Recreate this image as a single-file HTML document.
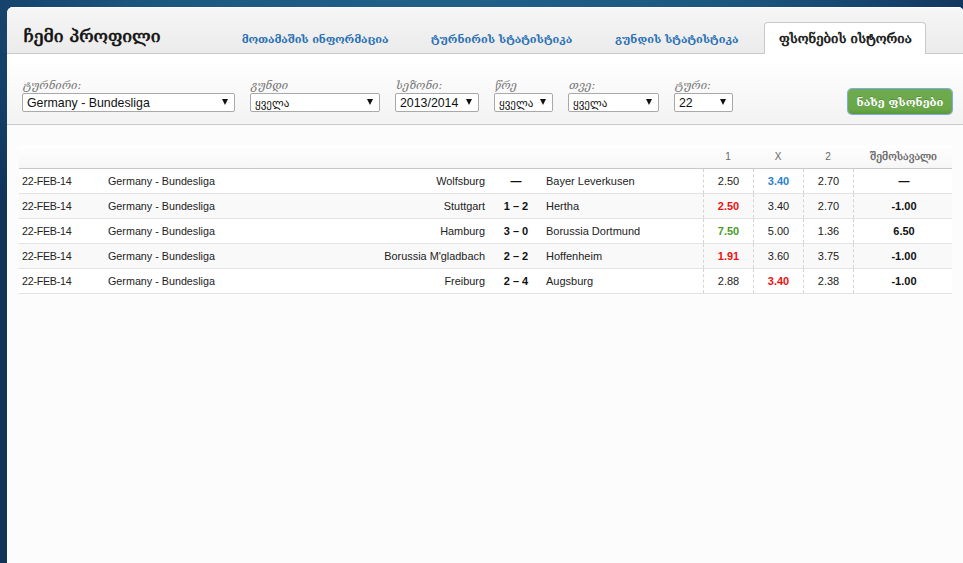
<!DOCTYPE html>
<html lang="ka">
<head>
<meta charset="utf-8">
<title>ჩემი პროფილი</title>
<style>
*{box-sizing:border-box;margin:0;padding:0}
html,body{width:963px;height:563px;overflow:hidden}
body{background:#10335a;background-image:radial-gradient(ellipse 545px 330px at 440px 0,#1f6089 0%,#1d5a84 38%,#1c567e 55%,#15426b 82%,#10335a 100%);font-family:"Liberation Sans","DejaVu Sans",sans-serif;font-size:11px;color:#222;position:relative}
.ka{font-family:"DejaVu Serif","DejaVu Sans",serif}
#panel{position:absolute;left:7px;top:7px;width:957px;height:600px;background:#fcfcfc;border-radius:6px 6px 0 0;overflow:hidden}
#head{position:absolute;left:0;top:0;width:100%;height:47px;background:linear-gradient(#f6f6f6,#ebebeb);border-bottom:1px solid #c9c9c9;box-shadow:inset 0 1px 0 #fff}
#title{position:absolute;left:16.5px;top:18px;font-size:17.5px;font-weight:normal;-webkit-text-stroke:0.6px #111;color:#111;line-height:22px;white-space:nowrap}
.tab{position:absolute;top:25px;font-size:11px;font-weight:bold;color:#2a70b3;white-space:nowrap;line-height:16px}
#tabA{position:absolute;left:757px;top:15px;width:162px;height:32px;background:#fff;border:1px solid #c9c9c9;border-bottom:none;border-radius:4px 4px 0 0}
#tabA span{position:absolute;left:14px;top:7px;font-size:13px;font-weight:normal;-webkit-text-stroke:0.55px #111;letter-spacing:0.08px;color:#111;white-space:nowrap;line-height:18px}
#filter{position:absolute;left:0;top:47px;width:100%;height:71px;background:linear-gradient(#fff 8%,#f3f3f3);border-bottom:1px solid #c9c9c9}
.lbl{position:absolute;top:25px;font-size:11.2px;font-style:italic;color:#777;margin-left:1px;white-space:nowrap;line-height:14px}
.sel{position:absolute;top:39px;height:19px;background:#fff;border:1px solid #a9a9a9;border-radius:2px;font-size:12.35px;line-height:19px;padding-left:4px;white-space:nowrap;color:#111}
.sel.k{font-family:'DejaVu Sans',sans-serif;font-size:11px;line-height:20px}
.sel i{position:absolute;right:6px;top:5px;width:0;height:0;border-left:3.5px solid transparent;border-right:3.5px solid transparent;border-top:6px solid #111}
#btn{position:absolute;left:841px;top:35px;width:104px;height:25px;border-radius:4px;background:linear-gradient(#6dab4d 0%,#69a749 80%,#5a983c 100%);color:#fff;font-weight:bold;font-size:11.2px;text-align:center;line-height:27px;box-shadow:0 0 0 1px #7fa9ec;text-shadow:0 -1px 0 rgba(0,0,0,.18)}
#tbl{position:absolute;left:12px;top:138px;width:933px}
#th{position:relative;height:24px;background:linear-gradient(#fff,#f6f6f6);border-bottom:1px solid #c9c9c9;color:#666;font-size:10px}
.r{position:relative;height:25px;border-bottom:1px solid #e3e3e3;background:#fff;font-size:11px;line-height:25px;color:#222}
.r.alt{background:#f9f9f9}
.c{position:absolute;top:0;white-space:nowrap}
.d{left:3px;font-size:10.7px;letter-spacing:-0.25px}.l{left:89px;font-size:10.75px}.h{right:467px;text-align:right;font-size:10.9px}.s{left:477px;width:40px;text-align:center;font-weight:bold;color:#111}.a{left:527px}
.o{width:50px;text-align:center;border-left:1px dashed #d4d4d4;height:24px}
.o1{left:684px}.o2{left:734px}.o3{left:784px}.p{left:834px;width:101px;text-align:center;border-left:1px dashed #d4d4d4;height:24px;font-weight:bold;color:#111}
.red{color:#ee1111;font-weight:bold}.grn{color:#4a9a2a;font-weight:bold}.blu{color:#2a80d0;font-weight:bold}
#th .c{line-height:24px;border:none}
</style>
</head>
<body>
<div id="panel">
  <div id="head">
    <div id="title" class="ka">ჩემი პროფილი</div>
    <div class="tab ka" style="left:234.7px;letter-spacing:-0.14px">მოთამაშის ინფორმაცია</div>
    <div class="tab ka" style="left:424px">ტურნირის სტატისტიკა</div>
    <div class="tab ka" style="left:608px">გუნდის სტატისტიკა</div>
  </div>
  <div id="filter">
    <div class="lbl ka" style="left:15px">ტურნირი:</div>
    <div class="sel" style="left:15px;width:213px">Germany - Bundesliga<i></i></div>
    <div class="lbl ka" style="left:243px">გუნდი</div>
    <div class="sel k ka" style="left:243px;width:130px">ყველა<i></i></div>
    <div class="lbl ka" style="left:388px">სეზონი:</div>
    <div class="sel" style="left:388px;width:84px">2013/2014<i></i></div>
    <div class="lbl ka" style="left:487px">წრე</div>
    <div class="sel k ka" style="left:487px;width:59px">ყველა<i></i></div>
    <div class="lbl ka" style="left:561px">თვე:</div>
    <div class="sel k ka" style="left:561px;width:91px">ყველა<i></i></div>
    <div class="lbl ka" style="left:667px">ტური:</div>
    <div class="sel" style="left:667px;width:59px">22<i></i></div>
    <div id="btn" class="ka">ნახე ფსონები</div>
  </div>
  <div id="tabA"><span class="ka">ფსონების ისტორია</span></div>
  <div id="tbl">
    <div id="th"><span class="c o o1">1</span><span class="c o o2">X</span><span class="c o o3">2</span><span class="c p ka" style="font-weight:normal;color:#5a5a5a;font-size:10.4px;line-height:23px;-webkit-text-stroke:0.25px #666">შემოსავალი</span></div>
    <div class="r"><span class="c d">22-FEB-14</span><span class="c l">Germany - Bundesliga</span><span class="c h">Wolfsburg</span><span class="c s">—</span><span class="c a">Bayer Leverkusen</span><span class="c o o1">2.50</span><span class="c o o2 blu">3.40</span><span class="c o o3">2.70</span><span class="c p">—</span></div>
    <div class="r alt"><span class="c d">22-FEB-14</span><span class="c l">Germany - Bundesliga</span><span class="c h">Stuttgart</span><span class="c s">1 – 2</span><span class="c a">Hertha</span><span class="c o o1 red">2.50</span><span class="c o o2">3.40</span><span class="c o o3">2.70</span><span class="c p">-1.00</span></div>
    <div class="r"><span class="c d">22-FEB-14</span><span class="c l">Germany - Bundesliga</span><span class="c h">Hamburg</span><span class="c s">3 – 0</span><span class="c a">Borussia Dortmund</span><span class="c o o1 grn">7.50</span><span class="c o o2">5.00</span><span class="c o o3">1.36</span><span class="c p">6.50</span></div>
    <div class="r alt"><span class="c d">22-FEB-14</span><span class="c l">Germany - Bundesliga</span><span class="c h">Borussia M'gladbach</span><span class="c s">2 – 2</span><span class="c a">Hoffenheim</span><span class="c o o1 red">1.91</span><span class="c o o2">3.60</span><span class="c o o3">3.75</span><span class="c p">-1.00</span></div>
    <div class="r"><span class="c d">22-FEB-14</span><span class="c l">Germany - Bundesliga</span><span class="c h">Freiburg</span><span class="c s">2 – 4</span><span class="c a">Augsburg</span><span class="c o o1">2.88</span><span class="c o o2 red">3.40</span><span class="c o o3">2.38</span><span class="c p">-1.00</span></div>
  </div>
</div>
</body>
</html>
